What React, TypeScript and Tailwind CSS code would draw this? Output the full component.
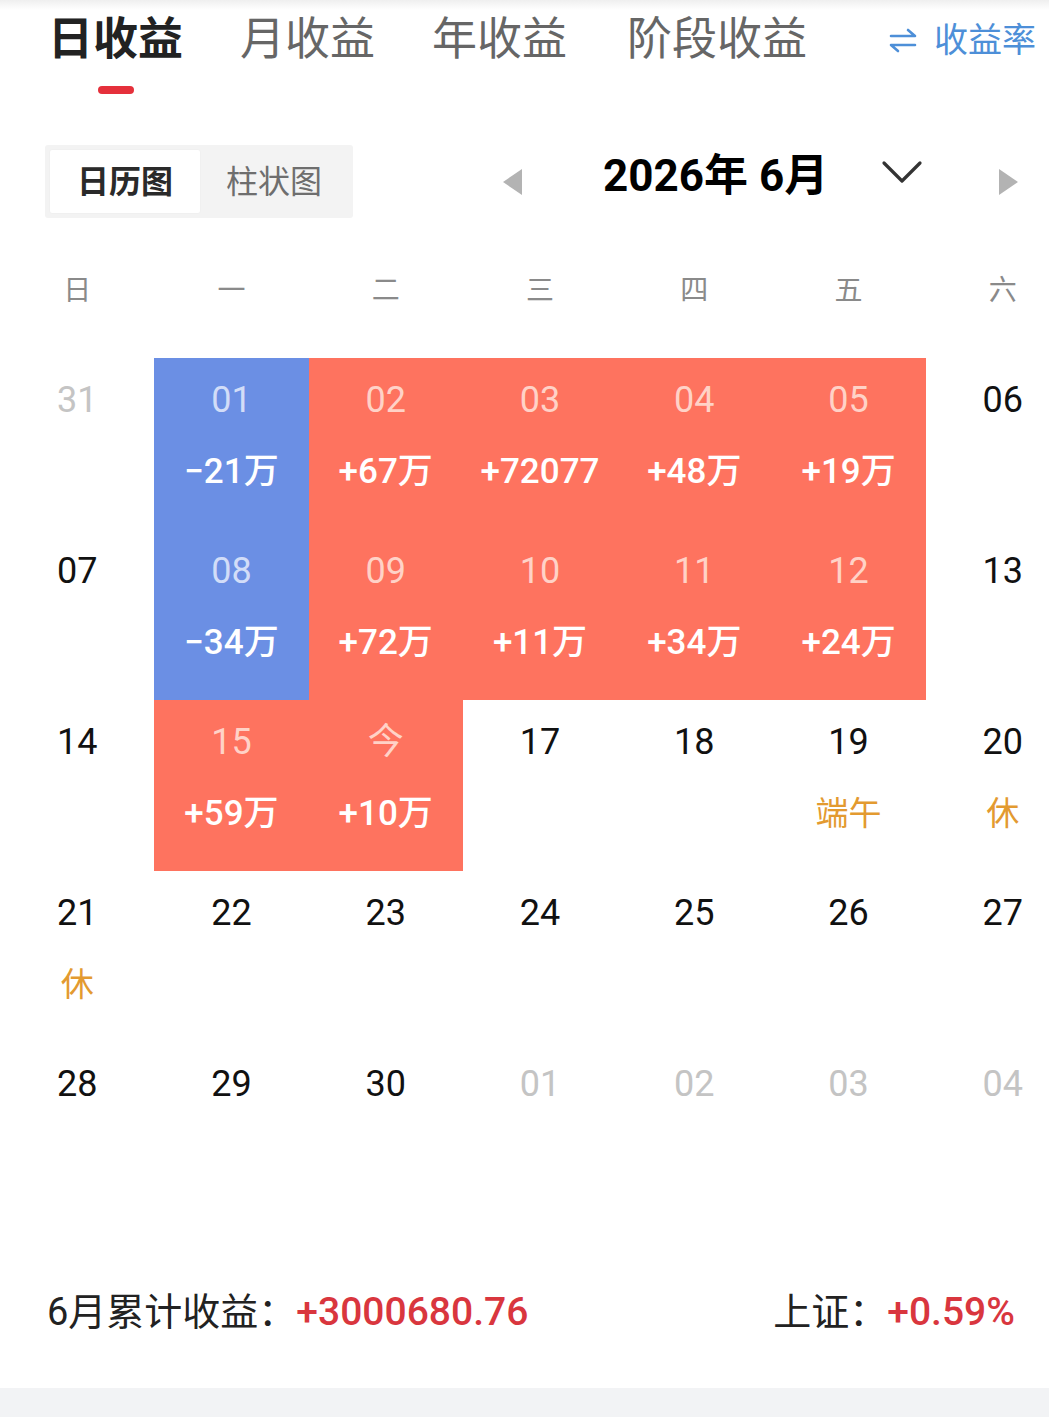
import React from "react";

type Cell = {
  d: string;
  muted?: boolean;
  tone?: "blue" | "red";
  value?: string;
  holiday?: string;
};

const rows: Cell[][] = [
  [
    { d: "31", muted: true },
    { d: "01", tone: "blue", value: "−21万" },
    { d: "02", tone: "red", value: "+67万" },
    { d: "03", tone: "red", value: "+72077" },
    { d: "04", tone: "red", value: "+48万" },
    { d: "05", tone: "red", value: "+19万" },
    { d: "06" },
  ],
  [
    { d: "07" },
    { d: "08", tone: "blue", value: "−34万" },
    { d: "09", tone: "red", value: "+72万" },
    { d: "10", tone: "red", value: "+11万" },
    { d: "11", tone: "red", value: "+34万" },
    { d: "12", tone: "red", value: "+24万" },
    { d: "13" },
  ],
  [
    { d: "14" },
    { d: "15", tone: "red", value: "+59万" },
    { d: "今", tone: "red", value: "+10万" },
    { d: "17" },
    { d: "18" },
    { d: "19", holiday: "端午" },
    { d: "20", holiday: "休" },
  ],
  [
    { d: "21", holiday: "休" },
    { d: "22" },
    { d: "23" },
    { d: "24" },
    { d: "25" },
    { d: "26" },
    { d: "27" },
  ],
  [
    { d: "28" },
    { d: "29" },
    { d: "30" },
    { d: "01", muted: true },
    { d: "02", muted: true },
    { d: "03", muted: true },
    { d: "04", muted: true },
  ],
];

const weekdays = ["日", "一", "二", "三", "四", "五", "六"];

function DayCell({ cell }: { cell: Cell }) {
  const bg = cell.tone === "blue" ? "bg-[#6b8fe4]" : cell.tone === "red" ? "bg-[#fe735f]" : "bg-white";
  const dayColor = cell.tone === "blue"
    ? "text-[#d2ddf8]"
    : cell.tone === "red"
      ? "text-[#ffd2c7]"
      : cell.muted
        ? "text-[#c4c4c4]"
        : "text-[#111111]";
  return (
    <div className={`flex h-[171px] flex-col items-center pt-[22px] ${bg}`}>
      <span className={`h-[40px] text-[36px] leading-[40px] ${dayColor}`}>{cell.d}</span>
      {cell.value && (
        <span className="mt-[32px] h-[40px] text-[35px] font-medium leading-[40px] text-white">{cell.value}</span>
      )}
      {cell.holiday && (
        <span className="mt-[32px] h-[40px] text-[33px] leading-[40px] text-[#e39a30]">{cell.holiday}</span>
      )}
    </div>
  );
}

export default function App() {
  return (
    <div className="h-[1417px] w-[1049px] overflow-hidden bg-white font-['Roboto','Noto_Sans_CJK_SC',sans-serif]">
      {/* top tabs */}
      <div className="flex h-[98px] items-start bg-[linear-gradient(to_bottom,#efefef,#ffffff_10px)] pl-[48px] pt-[17px]">
        <div className="flex flex-col items-center">
          <span className="text-[45px] font-bold leading-[45px] text-[#222222]">日收益</span>
          <span className="mt-[24px] h-[8px] w-[36px] rounded-full bg-[#e5303b]" />
        </div>
        <span className="ml-[57px] text-[45px] leading-[45px] text-[#666666]">月收益</span>
        <span className="ml-[57px] text-[45px] leading-[45px] text-[#666666]">年收益</span>
        <span className="ml-[60px] text-[45px] leading-[45px] text-[#666666]">阶段收益</span>
        <div className="ml-[81px] mt-[4px] flex items-center gap-[16px] text-[#4d8fd8]">
          <svg width="30" height="26" viewBox="0 0 30 26" fill="none" stroke="currentColor" strokeWidth="2.6" strokeLinecap="round" strokeLinejoin="round">
            <path d="M3 9 H27 L20 3" />
            <path d="M27 18 H3 L10 24" />
          </svg>
          <span className="text-[34px] leading-[38px]">收益率</span>
        </div>
      </div>

      {/* toggle + month */}
      <div className="mt-[47px] flex h-[73px] items-center">
        <div className="ml-[45px] flex h-[73px] w-[308px] rounded-[3px] bg-[#f3f3f3] p-[5px]">
          <div className="flex w-[150px] items-center justify-center rounded-[2px] bg-white text-[32px] font-bold text-[#2a2a2a] shadow-[0_0_2px_rgba(0,0,0,0.05)]">
            日历图
          </div>
          <div className="flex flex-1 items-center justify-center text-[32px] text-[#6e6e6e]">柱状图</div>
        </div>
        <svg className="ml-[150px]" width="19" height="26" viewBox="0 0 19 26">
          <polygon points="19,0 19,26 0,13" fill="#b3b3b3" />
        </svg>
        <div className="mb-[12px] ml-[81px] w-[230px] whitespace-nowrap text-[44px] font-bold leading-[48px] text-black">
          2026年 6月
        </div>
        <svg className="mb-[20px] ml-[48px]" width="42" height="26" viewBox="0 0 42 26" fill="none" stroke="#333333" strokeWidth="3.2" strokeLinecap="round" strokeLinejoin="round">
          <path d="M3 4 L21 22 L39 4" />
        </svg>
        <svg className="ml-[76px]" width="19" height="26" viewBox="0 0 19 26">
          <polygon points="0,0 19,13 0,26" fill="#b3b3b3" />
        </svg>
      </div>

      {/* weekdays */}
      <div className="mt-[43px] grid w-[1080px] grid-cols-7">
        {weekdays.map((w) => (
          <span key={w} className="h-[60px] text-center text-[28px] leading-[60px] text-[#8a8a8a]">
            {w}
          </span>
        ))}
      </div>

      {/* calendar */}
      <div className="mt-[37px] grid w-[1080px] grid-cols-7">
        {rows.flat().map((cell, i) => (
          <DayCell key={i} cell={cell} />
        ))}
      </div>

      {/* summary */}
      <div className="mt-[69px] flex h-[60px] items-center justify-between pl-[47px] pr-[34px] text-[38px]">
        <div className="flex items-center">
          <span className="text-[#222222]">6月累计收益：</span>
          <span className="text-[39px] font-medium text-[#d9363e]">+3000680.76</span>
        </div>
        <div className="flex items-center">
          <span className="text-[#222222]">上证：</span>
          <span className="text-[39px] font-medium text-[#d9363e]">+0.59%</span>
        </div>
      </div>

      <div className="mt-[46px] h-[40px] bg-[#f2f3f5]" />
    </div>
  );
}
